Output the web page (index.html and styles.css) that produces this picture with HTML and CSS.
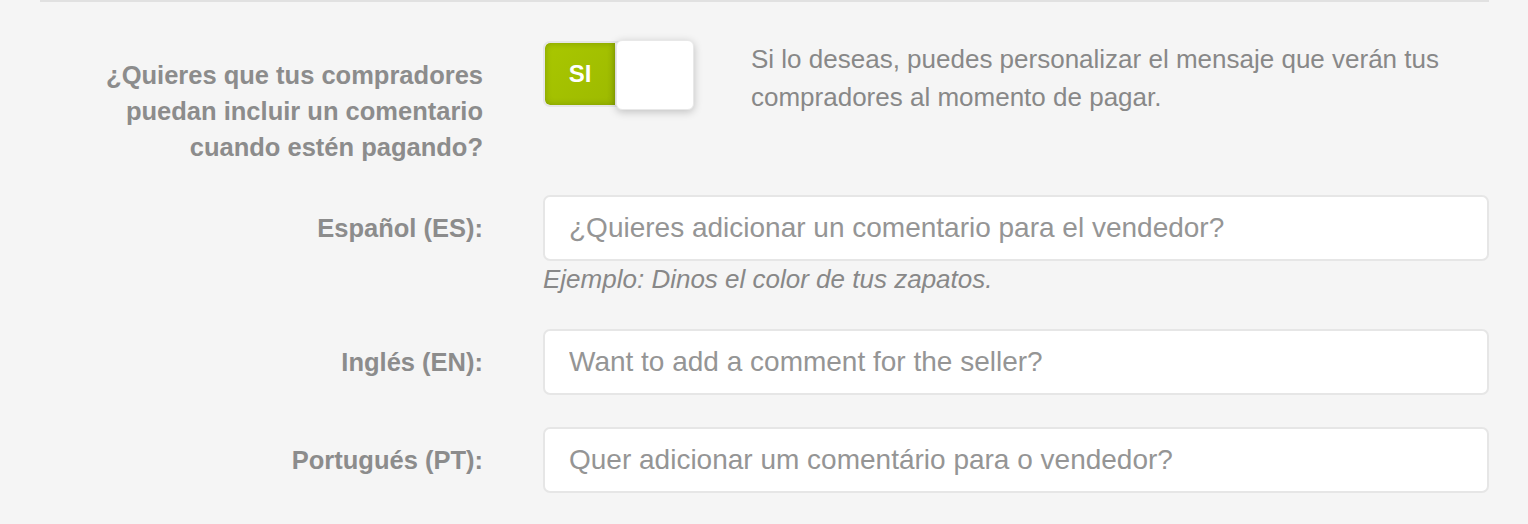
FILE: index.html
```html
<!DOCTYPE html>
<html lang="es">
<head>
<meta charset="utf-8">
<title>Comentario</title>
<link rel="stylesheet" href="styles.css">
</head>
<body>
<div class="panel">
  <div class="row row-toggle">
    <div class="label label-multi">¿Quieres que tus compradores puedan incluir un comentario cuando estén pagando?</div>
    <div class="field field-toggle">
      <div class="toggle">
        <div class="toggle-track"><span class="toggle-on">SI</span></div>
        <div class="toggle-knob"></div>
      </div>
      <p class="desc">Si lo deseas, puedes personalizar el mensaje que verán tus compradores al momento de pagar.</p>
    </div>
  </div>
  <div class="row row-es">
    <div class="label">Español (ES):</div>
    <div class="field">
      <input class="text" type="text" placeholder="¿Quieres adicionar un comentario para el vendedor?">
    </div>
  </div>
  <div class="hint-row">
    <div class="label"></div>
    <div class="hint">Ejemplo: Dinos el color de tus zapatos.</div>
  </div>
  <div class="row row-en">
    <div class="label">Inglés (EN):</div>
    <div class="field">
      <input class="text" type="text" placeholder="Want to add a comment for the seller?">
    </div>
  </div>
  <div class="row row-pt">
    <div class="label">Portugués (PT):</div>
    <div class="field">
      <input class="text" type="text" placeholder="Quer adicionar um comentário para o vendedor?">
    </div>
  </div>
</div>
</body>
</html>
```

FILE: styles.css
```css
* { box-sizing: border-box; }
html, body { margin: 0; padding: 0; background: #f5f5f5; }
body {
  font-family: "Liberation Sans", Arial, Helvetica, sans-serif;
  color: #888;
  height: 524px;
  overflow: hidden;
}
.panel {
  margin: 0 39px 0 40px;
  border-top: 2px solid #e1e1e1;
  padding-top: 38px;
}
.row {
  display: flex;
  align-items: center;
  gap: 60px;
}
.label {
  width: 443px;
  flex: none;
  text-align: right;
  font-weight: bold;
  font-size: 25.5px;
  line-height: 36px;
  color: #8c8c8c;
}
.field { flex: 1; }
.row-toggle { align-items: flex-start; }
.label-multi { padding: 17px 0 0 40px; }
.field-toggle {
  display: flex;
  align-items: flex-start;
}
.toggle {
  position: relative;
  width: 153px;
  height: 70px;
  flex: none;
}
.toggle-track {
  position: absolute;
  left: 0;
  top: 1px;
  width: 140px;
  height: 66px;
  border: 2px solid #e6e6e6;
  border-radius: 7px;
  background: #f3f3f3;
  overflow: hidden;
}
.toggle-on {
  display: flex;
  align-items: center;
  justify-content: center;
  width: 70px;
  height: 100%;
  background: linear-gradient(135deg, #a9c700 0%, #9dba00 100%);
  box-shadow: inset 0 0 6px rgba(60, 80, 0, 0.35);
  border-radius: 5px 0 0 5px;
  color: #fff;
  font-weight: bold;
  font-size: 24px;
}
.toggle-knob {
  position: absolute;
  left: 73px;
  top: 0;
  width: 78px;
  height: 70px;
  background: #fff;
  border-radius: 6px;
  border: 1px solid #e8e8e8;
  box-shadow: 0 2px 8px rgba(0, 0, 0, 0.22);
}
.desc {
  margin: 0 0 0 55px;
  font-size: 26px;
  line-height: 38px;
  color: #888;
  max-width: 720px;
}
.row-es { margin-top: 30px; }
.text {
  display: block;
  width: 100%;
  height: 66px;
  border: 2px solid #e6e6e6;
  border-radius: 7px;
  background: #fff;
  padding: 0 24px;
  font-family: "Liberation Sans", Arial, Helvetica, sans-serif;
  font-size: 28px;
  color: #666;
  outline: none;
}
.text::placeholder { color: #959595; opacity: 1; }
.hint-row {
  display: flex;
  gap: 60px;
  margin-top: 4px;
}
.hint-row .label { line-height: 28px; }
.hint {
  font-style: italic;
  font-size: 26px;
  line-height: 28px;
  color: #888;
}
.row-en { margin-top: 36px; }
.row-pt { margin-top: 32px; }
```
